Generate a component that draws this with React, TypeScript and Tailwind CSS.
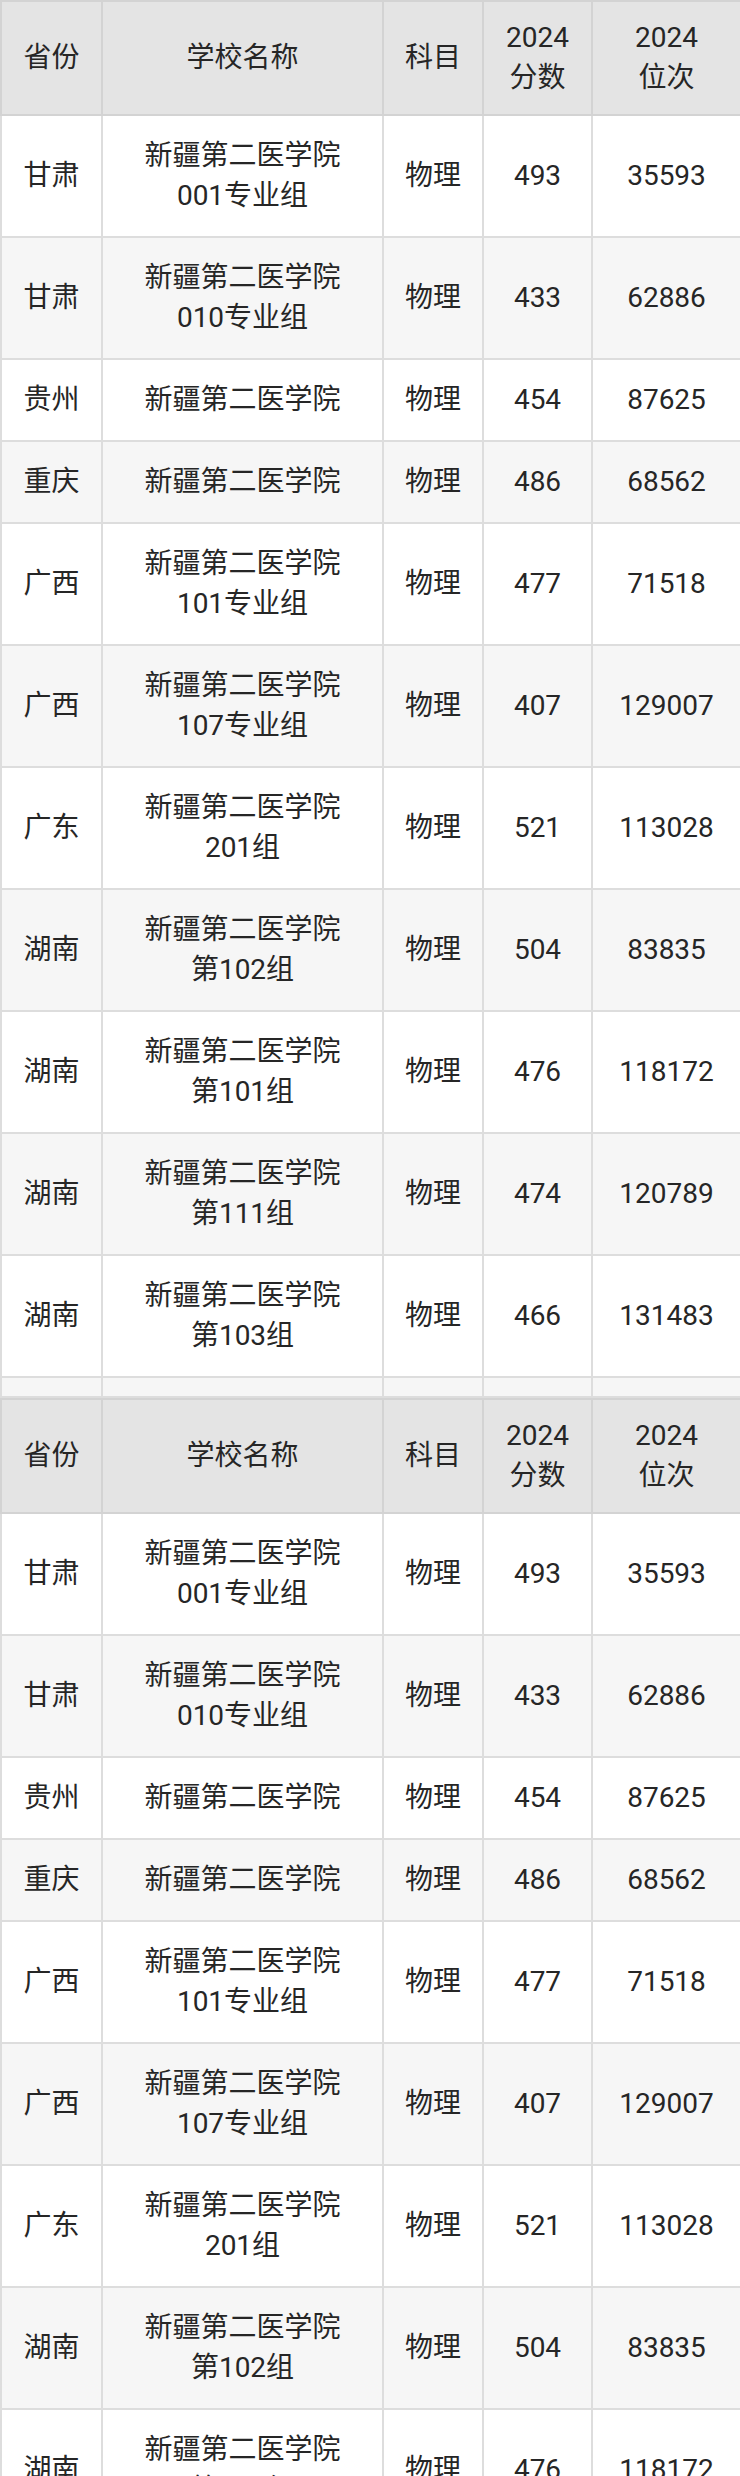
import { Fragment } from 'react';

interface ScoreRow {
    province: string;
    school: string;
    group?: string;
    subject: string;
    score: number;
    rank: number;
}

const ROWS: ScoreRow[] = [
    { province: '甘肃', school: '新疆第二医学院', group: '001专业组', subject: '物理', score: 493, rank: 35593 },
    { province: '甘肃', school: '新疆第二医学院', group: '010专业组', subject: '物理', score: 433, rank: 62886 },
    { province: '贵州', school: '新疆第二医学院', subject: '物理', score: 454, rank: 87625 },
    { province: '重庆', school: '新疆第二医学院', subject: '物理', score: 486, rank: 68562 },
    { province: '广西', school: '新疆第二医学院', group: '101专业组', subject: '物理', score: 477, rank: 71518 },
    { province: '广西', school: '新疆第二医学院', group: '107专业组', subject: '物理', score: 407, rank: 129007 },
    { province: '广东', school: '新疆第二医学院', group: '201组', subject: '物理', score: 521, rank: 113028 },
    { province: '湖南', school: '新疆第二医学院', group: '第102组', subject: '物理', score: 504, rank: 83835 },
    { province: '湖南', school: '新疆第二医学院', group: '第101组', subject: '物理', score: 476, rank: 118172 },
    { province: '湖南', school: '新疆第二医学院', group: '第111组', subject: '物理', score: 474, rank: 120789 },
    { province: '湖南', school: '新疆第二医学院', group: '第103组', subject: '物理', score: 466, rank: 131483 },
];

const th = 'border-2 border-[#d3d3d3] bg-[#e4e4e4] px-1 py-[16px] text-center align-middle font-normal';
const td = 'border-2 border-[#dddddd] px-1 py-[20px] text-center align-middle';
const blank = 'border-2 border-[#dddddd] h-[20px] p-0';

function ScoreTable() {
    return (
        <table className="w-[740px] table-fixed border-collapse">
            <colgroup>
                <col className="w-[101px]" />
                <col className="w-[281px]" />
                <col className="w-[100px]" />
                <col className="w-[109px]" />
                <col className="w-[149px]" />
            </colgroup>
            <thead>
                <tr>
                    <th className={th}>省份</th>
                    <th className={th}>学校名称</th>
                    <th className={th}>科目</th>
                    <th className={th}>2024<br />分数</th>
                    <th className={th}>2024<br />位次</th>
                </tr>
            </thead>
            <tbody>
                {ROWS.map((row, i) => (
                    <tr key={i} className={i % 2 === 1 ? 'bg-[#f6f6f6]' : 'bg-white'}>
                        <td className={td}>{row.province}</td>
                        <td className={td}>
                            {row.school}
                            {row.group && (
                                <>
                                    <br />
                                    {row.group}
                                </>
                            )}
                        </td>
                        <td className={td}>{row.subject}</td>
                        <td className={td}>{row.score}</td>
                        <td className={td}>{row.rank}</td>
                    </tr>
                ))}
                <tr className="bg-[#f6f6f6]">
                    <td className={blank} />
                    <td className={blank} />
                    <td className={blank} />
                    <td className={blank} />
                    <td className={blank} />
                </tr>
            </tbody>
        </table>
    );
}

export default function App() {
    return (
        <div className="w-[740px] bg-white text-[28px] leading-[40px] text-[#262626] [font-family:Roboto,'Noto_Sans_CJK_SC',sans-serif]">
            {[0, 1].map((n) => (
                <Fragment key={n}>
                    <ScoreTable />
                </Fragment>
            ))}
        </div>
    );
}
